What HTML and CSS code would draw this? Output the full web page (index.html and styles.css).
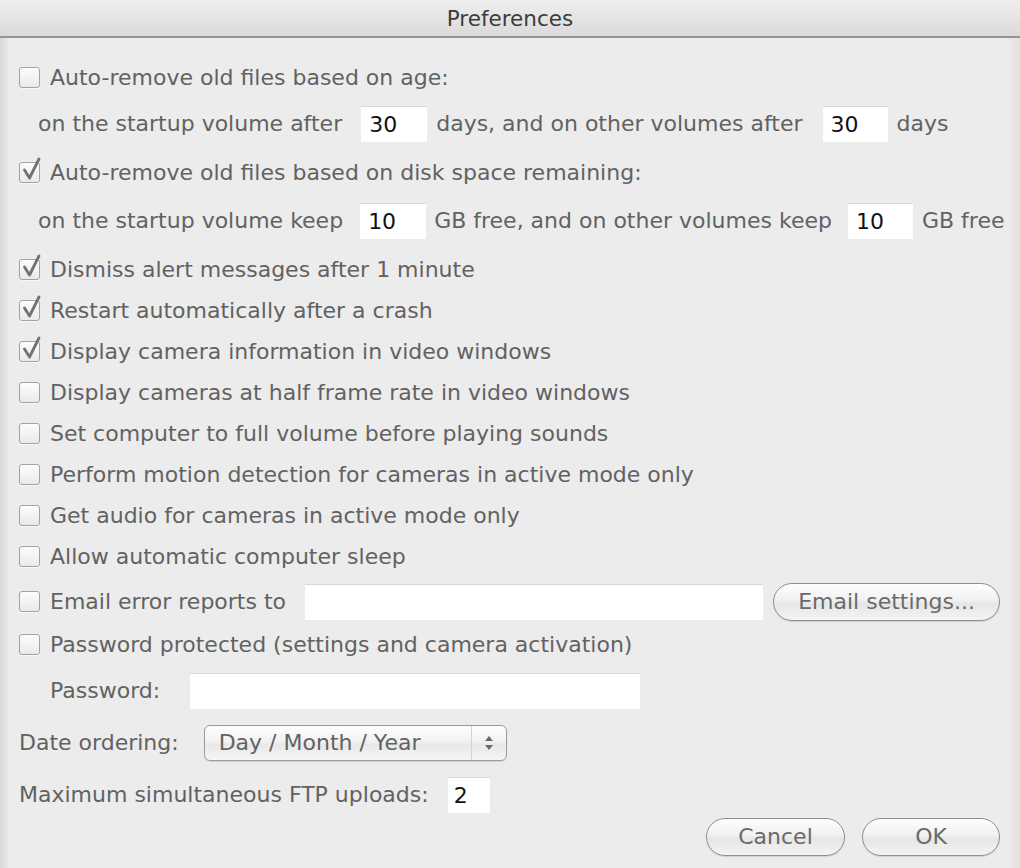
FILE: index.html
```html
<!DOCTYPE html>
<html>
<head>
<meta charset="utf-8">
<title>Preferences</title>
<link rel="stylesheet" href="styles.css">
</head>
<body>
<div class="window">
  <div class="titlebar">Preferences</div>
  <div class="content">
    <div class="row r1">
      <span class="cb"></span><span class="lbl">Auto-remove old files based on age:</span>
    </div>
    <div class="row sub r2">
      <span class="t">on the startup volume after</span>
      <span class="field f-num1">30</span>
      <span class="t">days, and on other volumes after</span>
      <span class="field f-num2">30</span>
      <span class="t">days</span>
    </div>
    <div class="row r3">
      <span class="cb on"></span><span class="lbl">Auto-remove old files based on disk space remaining:</span>
    </div>
    <div class="row sub r4">
      <span class="t">on the startup volume keep</span>
      <span class="field f-num3">10</span>
      <span class="t">GB free, and on other volumes keep</span>
      <span class="field f-num4">10</span>
      <span class="t">GB free</span>
    </div>
    <div class="row r5"><span class="cb on"></span><span class="lbl">Dismiss alert messages after 1 minute</span></div>
    <div class="row"><span class="cb on"></span><span class="lbl">Restart automatically after a crash</span></div>
    <div class="row"><span class="cb on"></span><span class="lbl">Display camera information in video windows</span></div>
    <div class="row"><span class="cb"></span><span class="lbl">Display cameras at half frame rate in video windows</span></div>
    <div class="row"><span class="cb"></span><span class="lbl">Set computer to full volume before playing sounds</span></div>
    <div class="row"><span class="cb"></span><span class="lbl">Perform motion detection for cameras in active mode only</span></div>
    <div class="row"><span class="cb"></span><span class="lbl">Get audio for cameras in active mode only</span></div>
    <div class="row"><span class="cb"></span><span class="lbl">Allow automatic computer sleep</span></div>
    <div class="row r13">
      <span class="cb"></span><span class="lbl">Email error reports to</span>
      <span class="field f-email"></span>
      <span class="btn b-email">Email settings...</span>
    </div>
    <div class="row r14"><span class="cb"></span><span class="lbl">Password protected (settings and camera activation)</span></div>
    <div class="row pw r15">
      <span class="t">Password:</span>
      <span class="field f-pw"></span>
    </div>
    <div class="row plain r16">
      <span class="t">Date ordering:</span>
      <span class="select">
        <span class="sel-text">Day / Month / Year</span>
        <span class="sel-arrows">
          <svg width="10" height="18" viewBox="0 0 10 18"><path d="M5 2 L9 7 L1 7 Z" fill="#6a6a6a"/><path d="M1 11 L9 11 L5 16 Z" fill="#6a6a6a"/></svg>
        </span>
      </span>
    </div>
    <div class="row plain r17">
      <span class="t">Maximum simultaneous FTP uploads:</span>
      <span class="field f-ftp">2</span>
    </div>
    <div class="row buttons r18">
      <span class="btn b-cancel">Cancel</span>
      <span class="btn b-ok">OK</span>
    </div>
  </div>
</div>
</body>
</html>
```
FILE: styles.css
```css
html, body {
  margin: 0;
  padding: 0;
  width: 1020px;
  height: 868px;
  overflow: hidden;
  background: #ececec;
}
.window {
  width: 1020px;
  height: 868px;
  font-family: "DejaVu Sans", "Liberation Sans", sans-serif;
  font-size: 22px;
  color: #626262;
  background: linear-gradient(to right, #d9d9d9 0, #e4e4e4 6px, #ececec 9px, #ececec 1008px, #e6e6e6 1014px, #e0e0e0 1020px);
}
.titlebar {
  height: 36px;
  border-bottom: 2px solid #959595;
  background: linear-gradient(#efefef, #dadada);
  color: #3c3c3c;
  text-align: center;
  line-height: 38px;
  font-size: 21.5px;
}
.content {
  padding-top: 19px;
}
.row {
  height: 41px;
  display: flex;
  align-items: center;
  padding-left: 19px;
  white-space: nowrap;
}
.row.sub { padding-left: 38px; }
.row.pw { padding-left: 50px; }
.lbl-wide { letter-spacing: 0.3px; }
.r2 { margin-top: 5px; }
.r3 { margin-top: 8px; }
.r4 { margin-top: 7px; }
.r5 { margin-top: 8px; }
.r13 { margin-top: 4px; }
.r14 { margin-top: 2px; }
.r15 { margin-top: 5px; }
.r16 { margin-top: 11px; }
.r17 { margin-top: 11px; }
.r18 { margin-top: 1px; }

.cb {
  position: relative;
  width: 21px;
  height: 21px;
  box-sizing: border-box;
  border: 1px solid #a3a3a3;
  border-radius: 3px;
  background: linear-gradient(#fdfdfd, #e9e9e9);
  box-shadow: 0 1px 0 rgba(255,255,255,0.6);
  margin-right: 10px;
  flex: none;
}
.cb.on::after {
  content: "";
  position: absolute;
  left: 2px;
  top: -6px;
  width: 19px;
  height: 24px;
  background: url("data:image/svg+xml;utf8,<svg xmlns='http://www.w3.org/2000/svg' width='19' height='24' viewBox='0 0 19 24'><path d='M2.5 13 L7.5 21 L17 2' fill='none' stroke='%23727272' stroke-width='2.8' stroke-linejoin='round' stroke-linecap='round'/></svg>") no-repeat;
}
.field {
  display: inline-block;
  height: 36px;
  box-sizing: border-box;
  background: #fff;
  border-top: 1px solid #d8d8d8;
  color: #111;
  line-height: 35px;
  padding-left: 8px;
  flex: none;
}
.f-num1 { width: 66px; margin: 0 9px 0 19px; }
.f-num2 { width: 65px; margin: 0 9px 0 20px; }
.f-num3 { width: 66px; margin: 0 8px 0 17px; }
.f-num4 { width: 65px; margin: 0 9px 0 16px; }
.f-email { width: 458px; margin-left: 19px; }
.f-pw { width: 450px; margin-left: 30px; }
.f-ftp { width: 42px; margin-left: 19px; padding-left: 6px; }

.btn {
  display: inline-flex;
  align-items: center;
  justify-content: center;
  height: 38px;
  box-sizing: border-box;
  border: 1px solid #8f8f8f;
  border-radius: 19px;
  background: linear-gradient(#fefefe 0%, #f1f1f1 45%, #e6e6e6 55%, #f4f4f4 100%);
  box-shadow: 0 1px 1px rgba(0,0,0,0.12);
  color: #6a6a6a;
  flex: none;
}
.b-email { width: 227px; margin-left: 10px; }
.buttons { justify-content: flex-end; padding-right: 20px; }
.b-cancel { width: 139px; }
.b-ok { width: 138px; margin-left: 17px; }

.select {
  display: inline-flex;
  align-items: center;
  margin-left: 25px;
  width: 303px;
  height: 36px;
  box-sizing: border-box;
  border: 1px solid #9a9a9a;
  border-radius: 6px;
  background: linear-gradient(#fefefe 0%, #f2f2f2 45%, #e8e8e8 55%, #f5f5f5 100%);
  box-shadow: 0 1px 1px rgba(0,0,0,0.1);
  flex: none;
}
.sel-text {
  flex: 1;
  padding-left: 14px;
}
.sel-arrows {
  width: 34px;
  height: 100%;
  border-left: 1px solid #d4d4d4;
  display: flex;
  align-items: center;
  justify-content: center;
}
.sel-arrows svg { display: block; }
```
